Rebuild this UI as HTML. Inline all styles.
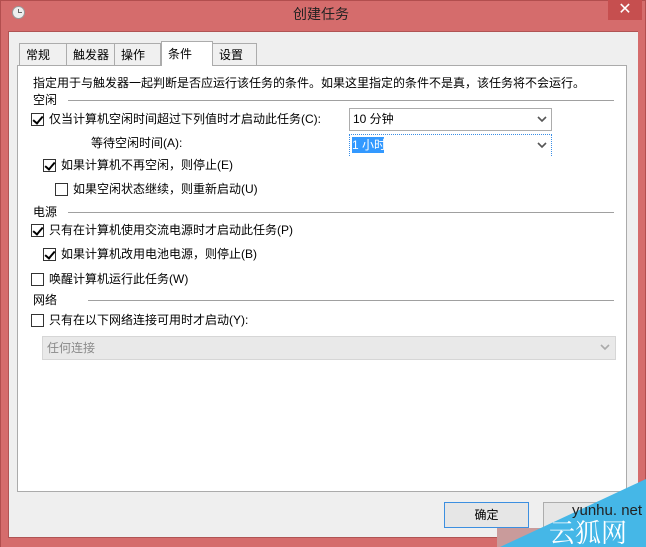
<!DOCTYPE html>
<html><head><meta charset="utf-8"><style>
*{margin:0;padding:0;box-sizing:border-box}
body{width:646px;height:547px;position:relative;overflow:hidden;background:#d56c6c;font:12px "Liberation Sans","Noto Sans CJK SC",sans-serif;color:#000}
.a{position:absolute}
.t{position:absolute;white-space:nowrap;line-height:14px}
.cb{position:absolute;width:13px;height:13px;border:1px solid #333;background:#fff}
.cb.c::after{content:"";position:absolute;left:3px;top:0px;width:4px;height:8px;border:solid #000;border-width:0 2px 2px 0;transform:rotate(40deg)}
.tab{position:absolute;top:43px;height:22px;border:1px solid #acacac;border-bottom:none;background:#f0f0f0;padding:4px 0 0 6px;line-height:14px}
.ln{position:absolute;height:1px;background:#a0a0a0}
</style></head><body>
<div class="a" style="left:0;top:0;width:646px;height:547px;border:1px solid #b24e4e;border-bottom:none"></div>
<div class="a" style="left:12px;top:6px;width:13px;height:13px;border-radius:50%;background:#eee;border:1px solid #999"></div>
<div class="a" style="left:18px;top:9px;width:1px;height:4px;background:#666"></div>
<div class="a" style="left:18px;top:12px;width:4px;height:1px;background:#666"></div>
<div class="t" style="left:293px;top:7px;font-size:14px;color:#222">创建任务</div>
<div class="a" style="left:608px;top:0;width:34px;height:20px;background:#c64f4f;color:#fff;text-align:center;font-size:16px;line-height:20px">✕</div>
<div class="a" style="left:8px;top:31px;width:630px;height:507px;background:#efefef;border:1px solid #b05454;border-width:1px 0 1px 1px"></div>
<div class="a" style="left:17px;top:65px;width:610px;height:427px;background:#fff;border:1px solid #ababab"></div>
<div class="tab" style="left:19px;width:48px">常规</div>
<div class="tab" style="left:66px;width:49px">触发器</div>
<div class="tab" style="left:114px;width:47px">操作</div>
<div class="tab" style="left:161px;width:52px;top:41px;height:25px;background:#fff;padding-top:5px;border-color:#acacac">条件</div>
<div class="tab" style="left:212px;width:45px">设置</div>
<div class="t" style="left:33px;top:76px">指定用于与触发器一起判断是否应运行该任务的条件。如果这里指定的条件不是真，该任务将不会运行。</div>
<div class="t" style="left:33px;top:93px">空闲</div><div class="ln" style="left:68px;top:100px;width:546px"></div>
<div class="cb c" style="left:31px;top:113px"></div><div class="t" style="left:49px;top:112px">仅当计算机空闲时间超过下列值时才启动此任务(C):</div>
<div class="a" style="left:349px;top:108px;width:203px;height:23px;border:1px solid #acacac;background:#fff"></div>
<div class="t" style="left:353px;top:112px">10 分钟</div>
<div class="t" style="left:91px;top:136px">等待空闲时间(A):</div>
<div class="a" style="left:349px;top:134px;width:203px;height:22px;border:1px dotted #3a8ee6;border-bottom:none;background:#fff"></div>
<div class="a" style="left:352px;top:137px;width:32px;height:16px;background:#3399ff"></div>
<div class="t" style="left:352px;top:138px;color:#fff">1 小时</div>
<div class="a" style="left:42px;top:336px;width:574px;height:24px;background:#e9e9e9;border:1px solid #d6d6d6"></div>
<div class="t" style="left:47px;top:341px;color:#8a8a8a">任何连接</div>
<svg class="a" style="left:0;top:0" width="646" height="547" fill="none" stroke-width="1.6">
<path d="M538 117l4 4 4-4" stroke="#555"/>
<path d="M538 143l4 4 4-4" stroke="#555"/>
<path d="M601 345l4 4 4-4" stroke="#aaa"/>
</svg>
<div class="cb c" style="left:43px;top:159px"></div><div class="t" style="left:61px;top:158px">如果计算机不再空闲，则停止(E)</div>
<div class="cb" style="left:55px;top:183px"></div><div class="t" style="left:73px;top:182px">如果空闲状态继续，则重新启动(U)</div>
<div class="t" style="left:33px;top:205px">电源</div><div class="ln" style="left:68px;top:212px;width:546px"></div>
<div class="cb c" style="left:31px;top:224px"></div><div class="t" style="left:49px;top:223px">只有在计算机使用交流电源时才启动此任务(P)</div>
<div class="cb c" style="left:43px;top:248px"></div><div class="t" style="left:61px;top:247px">如果计算机改用电池电源，则停止(B)</div>
<div class="cb" style="left:31px;top:273px"></div><div class="t" style="left:49px;top:272px">唤醒计算机运行此任务(W)</div>
<div class="t" style="left:33px;top:293px">网络</div><div class="ln" style="left:88px;top:300px;width:526px"></div>
<div class="cb" style="left:31px;top:314px"></div><div class="t" style="left:49px;top:313px">只有在以下网络连接可用时才启动(Y):</div>
<div class="a" style="left:444px;top:502px;width:85px;height:26px;border:1px solid #3c8fe0;background:#e6e6e6;text-align:center;line-height:24px">确定</div>
<div class="a" style="left:543px;top:502px;width:85px;height:26px;border:1px solid #adadad;background:#e6e6e6"></div>
<div class="a" style="left:497px;top:528px;width:50px;height:19px;background:#c99b9b"></div>
<svg class="a" style="left:0;top:0" width="646" height="547"><polygon points="500,547 646,547 646,479" fill="#45b7e7"/><text x="572" y="515" font-size="15" fill="#222" font-family="Liberation Sans,sans-serif">yunhu. net</text><text x="549" y="542" font-size="26" fill="#fff" font-family="Noto Serif CJK SC,serif">云狐网</text></svg>
</body></html>
